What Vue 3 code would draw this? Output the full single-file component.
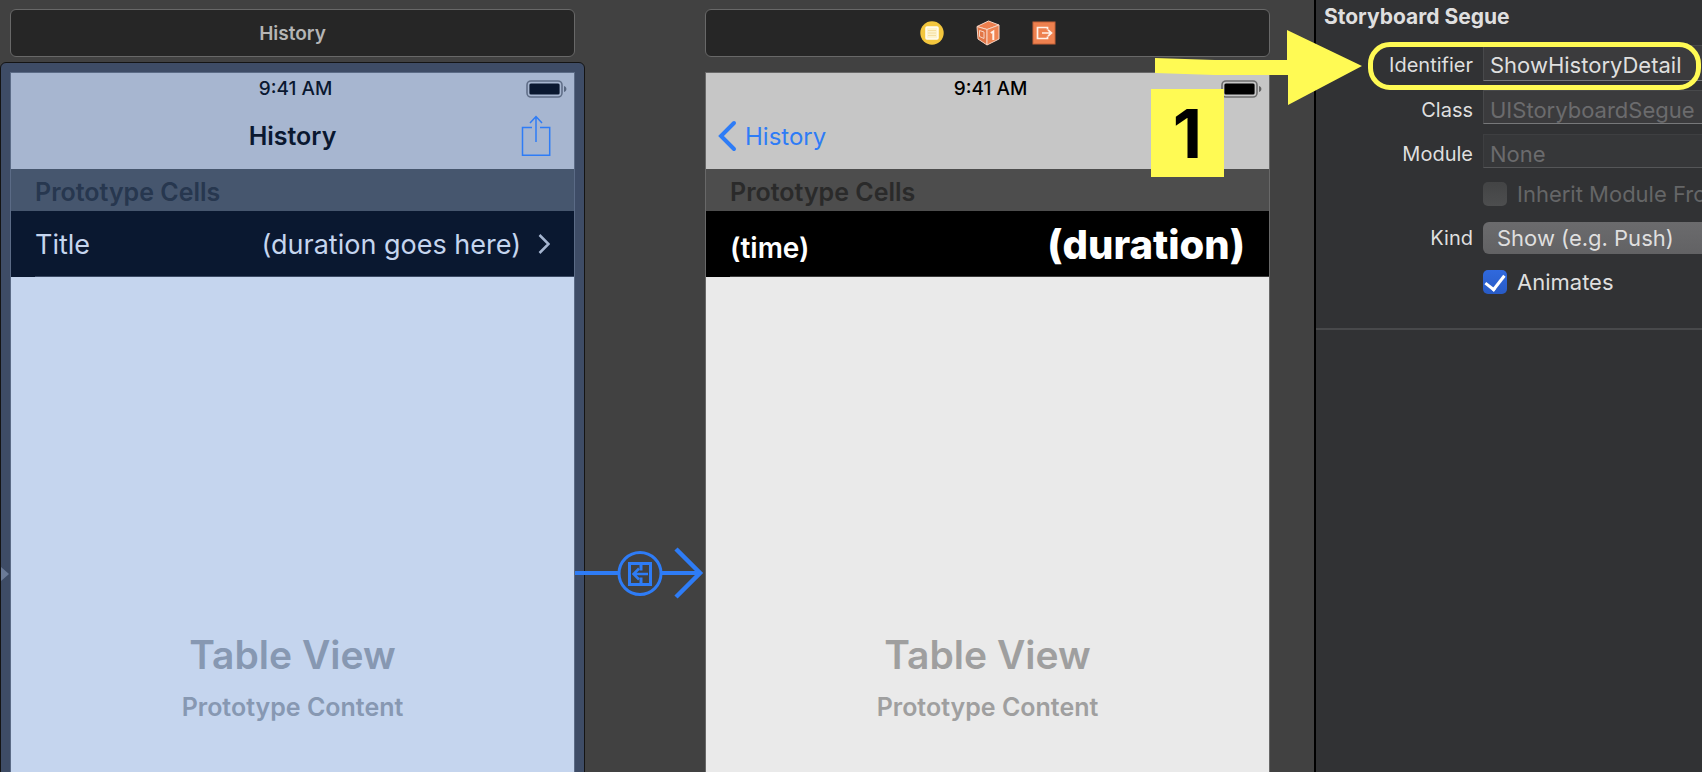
<script setup>
import { ref } from 'vue'

const identifier = ref('ShowHistoryDetail')
const className = ref('')
const moduleName = ref('')
const inherit = ref(false)
const kind = ref('show')
const animates = ref(true)
</script>

<template>
  <div class="workspace">
    <main class="canvas">
      <section class="scene selected">
        <header class="dock"><span class="dock-title">History</span></header>
        <div class="phone">
          <svg class="entry" width="8" height="14" viewBox="0 0 8 14" aria-hidden="true"><path d="M0 0L8 7L0 14Z" /></svg>
          <div class="bars">
            <div class="status">
              <span>9:41 AM</span>
              <svg class="battery" width="42" height="18" viewBox="0 0 42 18" aria-hidden="true">
                <rect x="1" y="1" width="35" height="16" rx="4" fill="none" stroke="currentColor" stroke-opacity=".45" stroke-width="1.6" />
                <rect x="3.4" y="3.4" width="30.2" height="11.2" rx="1.5" fill="currentColor" />
                <path d="M38 6c3.2 1 3.2 5 0 6z" fill="currentColor" fill-opacity=".5" />
              </svg>
            </div>
            <div class="nav">
              <h2 class="nav-title">History</h2>
              <button class="share" type="button" aria-label="Share">
                <svg width="30" height="42" viewBox="0 0 30 42" fill="none" stroke="#2e7cf6" stroke-width="1.5">
                  <path d="M11 12.5H1.5V40.3H28.7V12.5H19M15 27V1.5M9 8L15 1.5L21 8" />
                </svg>
              </button>
            </div>
          </div>
          <div class="section-head">Prototype Cells</div>
          <div class="cell">
            <span>Title</span>
            <span class="detail">(duration goes here)</span>
            <svg class="chevron" width="12" height="20" viewBox="0 0 12 20" fill="none" aria-hidden="true"><path d="M1.5 1L10.5 10L1.5 19" /></svg>
          </div>
          <div class="placeholder">
            <strong>Table View</strong>
            <span>Prototype Content</span>
          </div>
        </div>
      </section>

      <div class="segue">
        <svg width="130" height="60" viewBox="0 0 130 60" fill="none" stroke="#2e7cf6" aria-hidden="true">
          <path d="M0 30H43M87 30H125" stroke-width="4" />
          <path d="M101 6L125 30L101 54" stroke-width="4.5" />
          <circle cx="65" cy="30.5" r="21" stroke-width="3" />
          <rect x="54.5" y="20.5" width="21" height="21" stroke-width="3" />
          <path d="M66 21V27.5M66 34.5V41" stroke-width="3" />
          <path d="M73 31H59M64 25.5L58.5 31L64 36.5" stroke-width="2.5" />
        </svg>
      </div>

      <section class="scene">
        <header class="dock">
          <svg width="24" height="26" viewBox="0 0 24 26" aria-hidden="true">
            <circle cx="12" cy="13" r="11.7" fill="#f3c63d" />
            <rect x="6" y="7" width="12" height="12" rx="1" fill="#fdf3cd" stroke="#fffdf4" stroke-width="1.5" />
            <path d="M8 10.5H16M8 13H16M8 15.5H16" stroke="#f5dfa0" />
          </svg>
          <svg width="24" height="26" viewBox="0 0 24 26" stroke="#f8d5c4" stroke-width="1" stroke-linejoin="round" aria-hidden="true">
            <path d="M1 6.5L12.5 1L23 5L11 9.5Z" fill="#ee7f4e" />
            <path d="M1 6.5L11 9.5V25L2 19Z" fill="#e27646" />
            <path d="M11 9.5L23 5V19L11 25Z" fill="#ef8452" />
            <path d="M3.5 10.5L8 12V18.5L3.5 16.5Z" fill="none" />
            <path d="M14.8 13L17.3 11.5V20" fill="none" stroke="#fff2eb" stroke-width="2" stroke-linejoin="miter" />
          </svg>
          <svg width="24" height="26" viewBox="0 0 24 26" fill="none" aria-hidden="true">
            <rect x="1" y="2" width="22" height="22" fill="#ee814f" stroke="#c86238" />
            <path d="M15.5 9.5V7.500H5.5V18.5H15.5V16.5" stroke="#fff1e8" stroke-width="1.7" />
            <path d="M10 13H19M16 9.8L19.5 13L16 16.2" stroke="#fff1e8" stroke-width="1.7" />
          </svg>
        </header>
        <div class="phone">
          <div class="bars">
            <div class="status">
              <span>9:41 AM</span>
              <svg class="battery" width="42" height="18" viewBox="0 0 42 18" aria-hidden="true">
                <rect x="1" y="1" width="35" height="16" rx="4" fill="none" stroke="currentColor" stroke-opacity=".45" stroke-width="1.6" />
                <rect x="3.4" y="3.4" width="30.2" height="11.2" rx="1.5" fill="currentColor" />
                <path d="M38 6c3.2 1 3.2 5 0 6z" fill="currentColor" fill-opacity=".5" />
              </svg>
            </div>
            <div class="nav">
              <button class="back" type="button">
                <svg width="20" height="32" viewBox="0 0 20 32" fill="none" stroke="#2e7cf6" stroke-width="4" stroke-linecap="round" aria-hidden="true"><path d="M17 3L4 16L17 29" /></svg>
                History
              </button>
            </div>
          </div>
          <div class="section-head">Prototype Cells</div>
          <div class="cell">
            <span class="time">(time)</span>
            <span class="duration">(duration)</span>
          </div>
          <div class="placeholder">
            <strong>Table View</strong>
            <span>Prototype Content</span>
          </div>
        </div>
      </section>
    </main>

    <aside class="inspector">
      <h1 class="heading">Storyboard Segue</h1>
      <form class="form" @submit.prevent>
        <div class="row field-row first">
          <label for="identifier">Identifier</label>
          <input id="identifier" v-model="identifier" class="field" type="text" />
        </div>
        <div class="row field-row">
          <label for="class">Class</label>
          <input id="class" v-model="className" class="field" type="text" placeholder="UIStoryboardSegue" />
        </div>
        <div class="row field-row">
          <label for="module">Module</label>
          <input id="module" v-model="moduleName" class="field dim" type="text" placeholder="None" />
        </div>
        <div class="row">
          <label class="check disabled">
            <input v-model="inherit" type="checkbox" disabled />
            <span>Inherit Module From Target</span>
          </label>
        </div>
        <div class="row">
          <label for="kind">Kind</label>
          <select id="kind" v-model="kind" class="select">
            <option value="show">Show (e.g. Push)</option>
          </select>
        </div>
        <div class="row">
          <label class="check">
            <input v-model="animates" type="checkbox" />
            <span>Animates</span>
          </label>
        </div>
      </form>
      <div class="highlight"></div>
      <svg class="arrow" width="208" height="76" viewBox="0 0 208 76" aria-hidden="true">
        <path d="M0 28L60 30H132V0L207 36L133 75V45H60L0 43Z" fill="#fffa54" />
      </svg>
      <div class="badge">1</div>
    </aside>
  </div>
</template>

<style>
body {
  margin: 0;
  background: #414141;
}
</style>

<style scoped>
* {
  box-sizing: border-box;
}

.workspace {
  display: grid;
  grid-template-columns: minmax(0, 1fr) 388px;
  height: 100vh;
  overflow: hidden;
  background: #414141;
  font-family: Inter, "Liberation Sans", sans-serif;
}

button,
input,
select {
  margin: 0;
  padding: 0;
  border: 0;
  background: none;
  color: inherit;
  font: inherit;
}

.canvas {
  display: grid;
  grid-template-columns: minmax(0, 1fr) 130px minmax(0, 1fr);
  padding: 9px 44px 0 10px;
}

.scene {
  display: flex;
  flex-direction: column;
  gap: 15px;
}

.dock {
  display: flex;
  flex: none;
  align-items: center;
  justify-content: center;
  gap: 32px;
  height: 48px;
  border: 1px solid #686868;
  border-radius: 6px;
  background: #262626;
}

.dock-title {
  color: #b5b5b5;
  font-size: 19px;
  font-weight: 600;
}

.phone {
  --ink: #000;
  --bar: #c6c6c6;
  --head: #4d4d4d;
  --head-ink: #2a2a2a;
  --cell: #000;
  --cell-ink: #fff;
  --rule: #3a3a3a;
  --sheet: #eaeaea;
  --faint: #9f9f9f;
  position: relative;
  display: flex;
  flex: 1;
  flex-direction: column;
  border: 1px solid #686868;
  border-bottom: 0;
  background: var(--sheet);
}

.selected .phone {
  --ink: #0a1830;
  --bar: #a7b6d0;
  --head: #46566e;
  --head-ink: #27374f;
  --cell: #0a1830;
  --cell-ink: #c5d5ee;
  --rule: #3b4a64;
  --sheet: #c5d5ee;
  --faint: #8798b2;
  border-color: #5b6b86;
}

.selected .phone::before {
  position: absolute;
  z-index: -1;
  inset: -11px -11px -20px;
  border: 1px solid #141414;
  border-radius: 6px;
  background: #3e4c66;
  content: "";
}

.selected {
  position: relative;
  z-index: 0;
}

.entry {
  position: absolute;
  top: 494px;
  left: -10px;
  fill: #6b7b98;
}

.bars {
  height: 96px;
  background: var(--bar);
  color: var(--ink);
}

.status {
  display: grid;
  grid-template-columns: 1fr auto 1fr;
  align-items: center;
  height: 31px;
  padding: 0 6px 0 12px;
  font-size: 19px;
  font-weight: 500;
}

.status span {
  grid-column: 2;
}

.battery {
  justify-self: end;
}

.nav {
  position: relative;
  display: flex;
  align-items: center;
  height: 64px;
}

.nav-title {
  flex: 1;
  margin: 0;
  font-size: 25px;
  font-weight: 600;
  text-align: center;
}

.share {
  position: absolute;
  top: 11px;
  right: 23px;
}

.share svg,
.back svg {
  display: block;
}

.back {
  display: flex;
  align-items: center;
  gap: 8px;
  padding-left: 11px;
  color: #2e7cf6;
  font-size: 24px;
}

.section-head {
  height: 42px;
  padding-left: 24px;
  background: var(--head);
  color: var(--head-ink);
  font-size: 25px;
  font-weight: 600;
  line-height: 46px;
}

.cell {
  position: relative;
  display: flex;
  align-items: center;
  height: 66px;
  padding: 0 24px;
  background: var(--cell);
  color: var(--cell-ink);
  font-size: 27px;
}

.cell::after {
  position: absolute;
  right: 0;
  bottom: 0;
  left: 24px;
  height: 1px;
  background: var(--rule);
  content: "";
}

.detail {
  margin-left: auto;
}

.chevron {
  margin-left: 17px;
  stroke: #a5b5d0;
  stroke-width: 2.5;
}

.time {
  padding-top: 8px;
  font-size: 28px;
  font-weight: 600;
}

.duration {
  margin-left: auto;
  font-size: 40px;
  font-weight: 800;
}

.placeholder {
  display: flex;
  flex-direction: column;
  align-items: center;
  gap: 10px;
  padding-top: 352px;
  color: var(--faint);
  font-size: 25px;
  font-weight: 600;
  line-height: 32px;
}

.placeholder strong {
  font-size: 39px;
  font-weight: 600;
  line-height: 52px;
}

.segue {
  position: relative;
  z-index: 1;
  padding-top: 534px;
}

.segue svg {
  display: block;
}

.inspector {
  position: relative;
  border-left: 2px solid #000;
  background: #313234;
  color: #dfdfdf;
  font-size: 20px;
}

.heading {
  height: 45px;
  margin: 0;
  padding-left: 8px;
  font-size: 21px;
  font-weight: 700;
  line-height: 34px;
}

.form {
  display: flex;
  flex-direction: column;
  gap: 12px;
  height: 285px;
  overflow: hidden;
  border-bottom: 2px solid #48494b;
}

.row {
  display: grid;
  flex: none;
  grid-template-columns: 157px minmax(0, 1fr);
  align-items: center;
  column-gap: 10px;
  height: 32px;
}

.row > label:first-child:not(.check) {
  text-align: right;
}

.field-row label {
  padding-top: 6px;
}

.field {
  width: 100%;
  height: 100%;
  padding: 6px 0 0 6px;
  border: 1px solid #48494b;
  border-bottom-color: #77787a;
  border-right: 0;
  background: #3b3b3d;
  font-size: 22px;
}

.field::placeholder {
  color: #6b6b6d;
  opacity: 1;
}

.dim {
  border-color: #3e3f41;
  border-bottom-color: #555658;
  background: #363739;
}

.first {
  height: 36px;
  margin-bottom: -3px;
}

.first label,
.first .field {
  padding-top: 4px;
}

.check {
  display: flex;
  grid-column: 2;
  align-items: center;
  gap: 10px;
  overflow: hidden;
  white-space: nowrap;
  font-size: 22px;
}

.check input {
  display: grid;
  flex: none;
  place-items: center;
  width: 24px;
  height: 24px;
  border-radius: 5px;
  background: linear-gradient(#434445, #4d4e4f);
  appearance: none;
}

.check input:checked {
  background: linear-gradient(#3069dd, #285bc6);
}

.check input:checked::after {
  width: 9px;
  height: 16px;
  margin-bottom: 4px;
  border: solid #fff;
  border-width: 0 3px 3px 0;
  transform: rotate(38deg);
  content: "";
}

.disabled {
  color: #656667;
}

.select {
  width: 100%;
  height: 32px;
  padding-left: 14px;
  border-radius: 6px 0 0 6px;
  background: linear-gradient(#6b6b6d, #626264);
  font-size: 22px;
  appearance: none;
}

.highlight {
  position: absolute;
  top: 42px;
  right: 1px;
  left: 52px;
  height: 48px;
  border: 5px solid #fffa54;
  border-radius: 22px;
  pointer-events: none;
}

.arrow {
  position: absolute;
  top: 30px;
  left: -161px;
}

.badge {
  position: absolute;
  top: 89px;
  left: -165px;
  width: 73px;
  height: 88px;
  background: #fffa54;
  color: #000;
  font-size: 68px;
  font-weight: 700;
  line-height: 88px;
  text-align: center;
}
</style>
